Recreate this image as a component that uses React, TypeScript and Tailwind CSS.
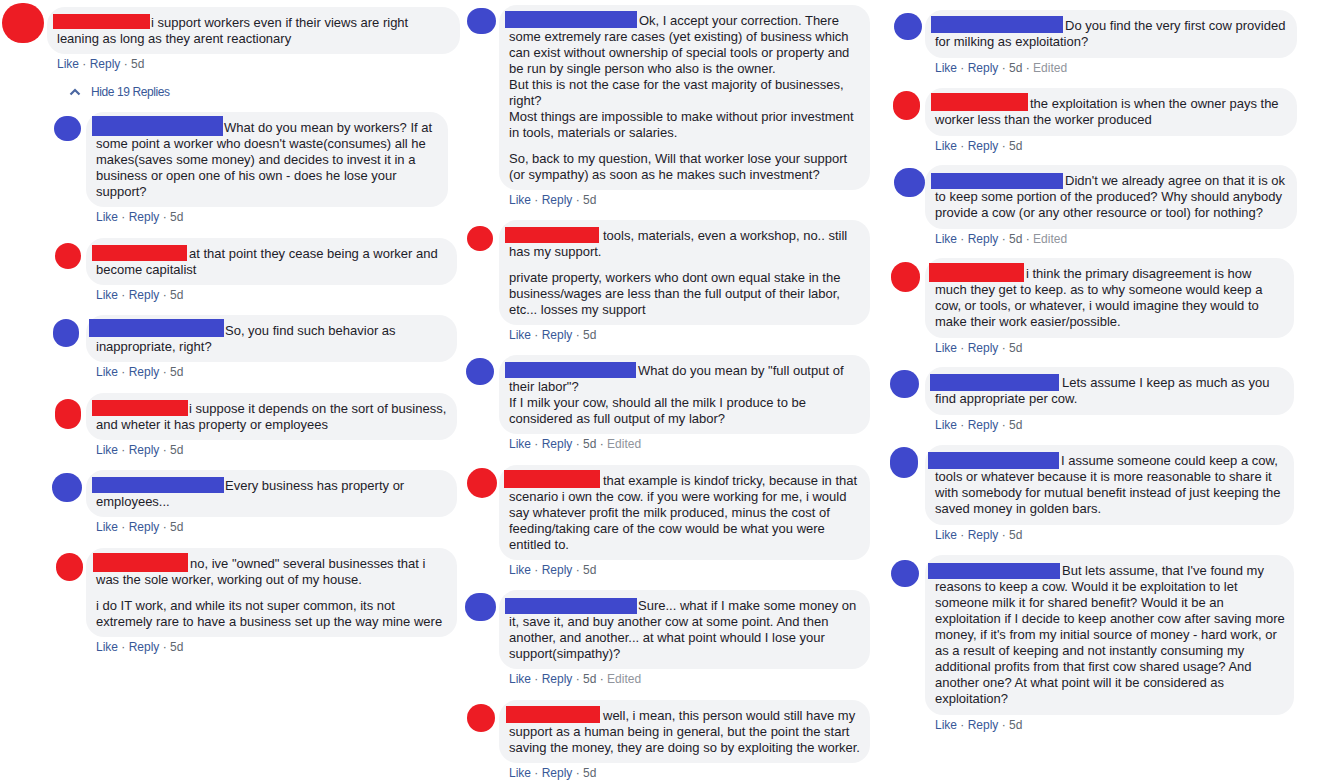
import React from 'react'

type Comment = {
  red?: boolean
  // avatar: x inside slot, y from bubble top, width, height
  av: [number, number, number, number]
  // redaction bar: dx from text start, width, dy from line top, height, gap after
  bar: [number, number, number, number, number]
  w: number
  mt: number
  lines: string[]
  edited?: boolean
}

const RED = '#ed1c24'
const BLUE = '#3f48cc'

const replies: Comment[] = [
  {
    av: [4, 4, 27, 25],
    bar: [-4, 131, -4, 20, 1],
    w: 362,
    mt: 12,
    lines: [
      'What do you mean by workers? If at',
      "some point a worker who doesn't waste(consumes) all he",
      'makes(saves some money) and decides to invest it in a',
      'business or open one of his own - does he lose your',
      'support?',
    ],
  },
  {
    red: true,
    av: [5, 5, 26, 26],
    bar: [-4, 95, -1, 16, 2],
    w: 371,
    mt: 13,
    lines: ['at that point they cease being a worker and', 'become capitalist'],
  },
  {
    av: [3, 4, 26, 28],
    bar: [-7, 135, -4, 18, 1],
    w: 371,
    mt: 12,
    lines: ['So, you find such behavior as', 'inappropriate, right?'],
  },
  {
    red: true,
    av: [5, 6, 26, 30],
    bar: [-4, 96, -1, 16, 1],
    w: 371,
    mt: 13,
    lines: ['i suppose it depends on the sort of business,', 'and wheter it has property or employees'],
  },
  {
    av: [2, 3, 30, 29],
    bar: [-4, 132, -1, 16, 1],
    w: 371,
    mt: 12,
    lines: ['Every business has property or', 'employees...'],
  },
  {
    red: true,
    av: [6, 5, 27, 28],
    bar: [-3, 95, -3, 19, 2],
    w: 371,
    mt: 13,
    lines: [
      'no, ive "owned" several businesses that i',
      'was the sole worker, working out of my house.',
      '',
      'i do IT work, and while its not super common, its not',
      'extremely rare to have a business set up the way mine were',
    ],
  },
]

const middle: Comment[] = [
  {
    av: [4, 3, 29, 26],
    bar: [-4, 132, -2, 17, 2],
    w: 371,
    mt: 0,
    lines: [
      'Ok, I accept your correction. There',
      'some extremely rare cases (yet existing) of business which',
      'can exist without ownership of special tools or property and',
      'be run by single person who also is the owner.',
      'But this is not the case for the vast majority of businesses,',
      'right?',
      'Most things are impossible to make without prior investment',
      'in tools, materials or salaries.',
      '',
      'So, back to my question, Will that worker lose your support',
      '(or sympathy) as soon as he makes such investment?',
    ],
  },
  {
    red: true,
    av: [4, 6, 26, 25],
    bar: [-4, 94, -1, 16, 4],
    w: 371,
    mt: 12,
    lines: [
      'tools, materials, even a workshop, no.. still',
      'has my support.',
      '',
      'private property, workers who dont own equal stake in the',
      'business/wages are less than the full output of their labor,',
      'etc... losses my support',
    ],
  },
  {
    av: [3, 3, 28, 27],
    bar: [-4, 131, -1, 16, 2],
    w: 371,
    mt: 12,
    edited: true,
    lines: [
      'What do you mean by "full output of',
      'their labor"?',
      'If I milk your cow, should all the milk I produce to be',
      'considered as full output of my labor?',
    ],
  },
  {
    red: true,
    av: [4, 3, 30, 30],
    bar: [-5, 96, -3, 18, 3],
    w: 371,
    mt: 13,
    lines: [
      'that example is kindof tricky, because in that',
      'scenario i own the cow. if you were working for me, i would',
      'say whatever profit the milk produced, minus the cost of',
      'feeding/taking care of the cow would be what you were',
      'entitled to.',
    ],
  },
  {
    av: [2, 3, 31, 28],
    bar: [-4, 132, 0, 16, 1],
    w: 371,
    mt: 12,
    edited: true,
    lines: [
      'Sure... what if I make some money on',
      'it, save it, and buy another cow at some point. And then',
      'another, and another... at what point whould I lose your',
      'support(simpathy)?',
    ],
  },
  {
    red: true,
    av: [4, 4, 28, 28],
    bar: [-3, 94, -2, 17, 3],
    w: 371,
    mt: 13,
    lines: [
      'well, i mean, this person would still have my',
      'support as a human being in general, but the point the start',
      'saving the money, they are doing so by exploiting the worker.',
    ],
  },
]

const right: Comment[] = [
  {
    av: [9, 3, 28, 27],
    bar: [-4, 132, -2, 17, 2],
    w: 372,
    mt: 0,
    edited: true,
    lines: ['Do you find the very first cow provided', 'for milking as exploitation?'],
  },
  {
    red: true,
    av: [8, 3, 27, 29],
    bar: [-4, 97, -3, 18, 2],
    w: 372,
    mt: 12,
    lines: ['the exploitation is when the owner pays the', 'worker less than the worker produced'],
  },
  {
    av: [9, 3, 31, 29],
    bar: [-4, 132, 0, 16, 2],
    w: 372,
    mt: 11,
    edited: true,
    lines: [
      "Didn't we already agree on that it is ok",
      'to keep some portion of the produced? Why should anybody',
      'provide a cow (or any other resource or tool) for nothing?',
    ],
  },
  {
    red: true,
    av: [6, 4, 29, 30],
    bar: [-6, 95, -3, 19, 2],
    w: 369,
    mt: 11,
    lines: [
      'i think the primary disagreement is how',
      'much they get to keep. as to why someone would keep a',
      'cow, or tools, or whatever, i would imagine they would to',
      'make their work easier/possible.',
    ],
  },
  {
    av: [5, 3, 29, 28],
    bar: [-5, 129, -1, 17, 3],
    w: 369,
    mt: 11,
    lines: ['Lets assume I keep as much as you', 'find appropriate per cow.'],
  },
  {
    av: [5, 2, 28, 31],
    bar: [-7, 131, -1, 17, 2],
    w: 369,
    mt: 12,
    lines: [
      'I assume someone could keep a cow,',
      'tools or whatever because it is more reasonable to share it',
      'with somebody for mutual benefit instead of just keeping the',
      'saved money in golden bars.',
    ],
  },
  {
    av: [6, 5, 28, 27],
    bar: [-7, 132, 0, 16, 2],
    w: 369,
    mt: 12,
    lines: [
      'But lets assume, that I\'ve found my',
      'reasons to keep a cow. Would it be exploitation to let',
      'someone milk it for shared benefit? Would it be an',
      'exploitation if I decide to keep another cow after saving more',
      "money, if it's from my initial source of money - hard work, or",
      'as a result of keeping and not instantly consuming my',
      'additional profits from that first cow shared usage? And',
      'another one? At what point will it be considered as',
      'exploitation?',
    ],
  },
]

function Meta({ edited }: { edited?: boolean }) {
  return (
    <div className="mt-[2px] pl-[10px] text-[12px] leading-[16px] text-[#606770] whitespace-nowrap">
      <span className="text-[#385898]">Like</span> · <span className="text-[#385898]">Reply</span> · 5d
      {edited && (
        <>
          {' '}
          · <span className="text-[#90949c]">Edited</span>
        </>
      )}
    </div>
  )
}

function Bar({ red, bar }: { red?: boolean; bar: Comment['bar'] }) {
  const [dx, w, dy, h, gap] = bar
  return (
    <span
      className="relative inline-block align-top"
      style={{
        width: w,
        height: h,
        marginBottom: 16 - h,
        top: dy,
        marginLeft: dx,
        marginRight: gap,
        backgroundColor: red ? RED : BLUE,
      }}
    />
  )
}

function CommentRow({ c, slot, pb }: { c: Comment; slot: number; pb: string }) {
  const paras: string[][] = [[]]
  c.lines.forEach((l) => (l === '' ? paras.push([]) : paras[paras.length - 1].push(l)))
  const [ax, ay, aw, ah] = c.av
  return (
    <div className="flex items-start" style={{ marginTop: c.mt }}>
      <div className="flex-none" style={{ width: slot }}>
        <div
          className="rounded-full"
          style={{ marginLeft: ax, marginTop: ay, width: aw, height: ah, backgroundColor: c.red ? RED : BLUE }}
        />
      </div>
      <div>
        <div
          className={`rounded-[18px] bg-[#f2f3f5] px-[10px] pt-[8px] text-[13px] leading-[16px] text-[#1d2129] whitespace-nowrap ${pb}`}
          style={{ width: c.w }}
        >
          {paras.map((p, i) => (
            <div key={i} className={i > 0 ? 'mt-[10px]' : ''}>
              {i === 0 && <Bar red={c.red} bar={c.bar} />}
              {p.map((l, j) => (
                <React.Fragment key={j}>
                  {j > 0 && <br />}
                  {l}
                </React.Fragment>
              ))}
            </div>
          ))}
        </div>
        <Meta edited={c.edited} />
      </div>
    </div>
  )
}

export default function App() {
  return (
    <div
      className="flex h-[784px] w-[1326px] overflow-hidden bg-white"
      style={{ fontFamily: '"Liberation Sans", Arial, sans-serif' }}
    >
      {/* left thread */}
      <div className="w-[463px] flex-none pt-[7px]">
        <CommentRow
          slot={47}
          pb="pb-[7px]"
          c={{
            red: true,
            av: [2, -4, 42, 40],
            bar: [-4, 97, -1, 15, 1],
            w: 413,
            mt: 0,
            lines: ['i support workers even if their views are right', 'leaning as long as they arent reactionary'],
          }}
        />
        <div className="mt-[12px] flex items-center pl-[69px] text-[12px] leading-[16px] tracking-[-0.4px] text-[#385898]">
          <svg width="12" height="8" viewBox="0 0 12 8" className="mr-[10px]">
            <path d="M1.5 6.5 L6 2 L10.5 6.5" fill="none" stroke="#4b67a1" strokeWidth="2.2" />
          </svg>
          Hide 19 Replies
        </div>
        <div className="pl-[50px]">
          {replies.map((c, i) => (
            <CommentRow key={i} c={c} slot={36} pb="pb-[7px]" />
          ))}
        </div>
      </div>

      {/* middle thread */}
      <div className="w-[422px] flex-none pt-[5px]">
        {middle.map((c, i) => (
          <CommentRow key={i} c={c} slot={36} pb="pb-[7px]" />
        ))}
      </div>

      {/* right thread */}
      <div className="flex-1 pt-[10px]">
        {right.map((c, i) => (
          <CommentRow key={i} c={c} slot={40} pb="pb-[8px]" />
        ))}
      </div>
    </div>
  )
}
